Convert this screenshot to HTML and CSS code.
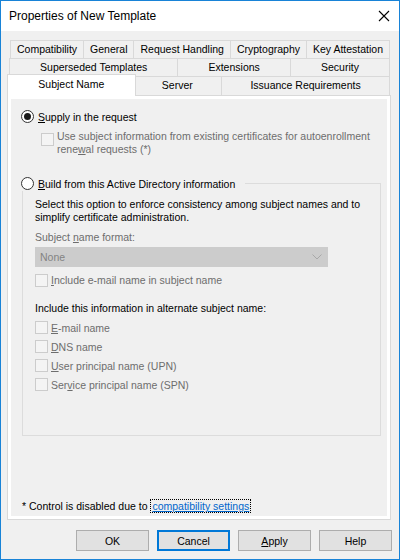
FILE: index.html
```html
<!DOCTYPE html>
<html lang="en">
<head>
    <meta charset="UTF-8">
    <meta name="viewport" content="width=device-width, initial-scale=1.0">
    <title>Properties of New Template</title>
    <link rel="stylesheet" href="styles.css">
</head>
<body>
    <div class="window">
        <div class="titlebar">
            <span class="title">Properties of New Template</span>
            <svg class="close" width="12" height="12" viewBox="0 0 12 12">
                <path d="M1 1 L11 11 M11 1 L1 11" stroke="#000" stroke-width="1.1" fill="none"/>
            </svg>
        </div>

        <div class="dialog">
            <div class="tabs">
                <div class="tab-row row-1">
                    <div class="tab">Compatibility</div>
                    <div class="tab">General</div>
                    <div class="tab">Request Handling</div>
                    <div class="tab">Cryptography</div>
                    <div class="tab">Key Attestation</div>
                </div>
                <div class="tab-row row-2">
                    <div class="tab">Superseded Templates</div>
                    <div class="tab">Extensions</div>
                    <div class="tab">Security</div>
                </div>
                <div class="tab-row row-3">
                    <div class="tab active">Subject Name</div>
                    <div class="tab">Server</div>
                    <div class="tab">Issuance Requirements</div>
                </div>
            </div>

            <div class="panel">
                <div class="page">
                    <label class="option">
                        <span class="radio checked"></span>
                        <span><u>S</u>upply in the request</span>
                    </label>

                    <label class="check sub disabled">
                        <span class="box"></span>
                        <span class="check-text">
                            <span class="line">Use subject information from existing certificates for autoenrollment</span>
                            <span class="line">rene<u>w</u>al requests (*)</span>
                        </span>
                    </label>

                    <fieldset class="group">
                        <legend>
                            <label class="option">
                                <span class="radio"></span>
                                <span><u>B</u>uild from this Active Directory information</span>
                            </label>
                        </legend>
                        <div class="group-body">
                            <p class="hint">Select this option to enforce consistency among subject names and to simplify certificate administration.</p>

                            <div class="field-label disabled">Subject <u>n</u>ame format:</div>
                            <div class="combo">
                                <span>None</span>
                                <svg width="10" height="6" viewBox="0 0 10 6">
                                    <path d="M0.5 0.5 L5 5 L9.5 0.5" stroke="#a8a8a8" stroke-width="1" fill="none"/>
                                </svg>
                            </div>

                            <label class="check disabled single">
                                <span class="box"></span>
                                <span><u>I</u>nclude e-mail name in subject name</span>
                            </label>

                            <p class="hint alt">Include this information in alternate subject name:</p>

                            <div class="check-list">
                                <label class="check disabled"><span class="box"></span><span><u>E</u>-mail name</span></label>
                                <label class="check disabled"><span class="box"></span><span><u>D</u>NS name</span></label>
                                <label class="check disabled"><span class="box"></span><span><u>U</u>ser principal name (UPN)</span></label>
                                <label class="check disabled"><span class="box"></span><span>Ser<u>v</u>ice principal name (SPN)</span></label>
                            </div>
                        </div>
                    </fieldset>

                    <div class="footnote">
                        * Control is disabled due to <a class="link" href="#">compatibility settings</a>
                    </div>
                </div>
            </div>

            <div class="buttons">
                <button class="btn">OK</button>
                <button class="btn default">Cancel</button>
                <button class="btn"><u>A</u>pply</button>
                <button class="btn">Help</button>
            </div>
        </div>
    </div>
</body>
</html>
```

FILE: styles.css
```css
* {
    box-sizing: border-box;
}

body {
    margin: 0;
    width: 400px;
    height: 560px;
    font-family: "Liberation Sans", Arial, sans-serif;
    font-size: 10.5px;
    color: #000;
    background-color: #f0f0f0;
}

.window {
    width: 400px;
    height: 560px;
    border: 1px solid #1883d7;
    display: flex;
    flex-direction: column;
    background-color: #f0f0f0;
}

/* title bar */
.titlebar {
    height: 30px;
    background-color: #fff;
    display: flex;
    align-items: center;
    justify-content: space-between;
    padding: 0 9px 0 8px;
}

.title {
    font-size: 12px;
}

.close {
    display: block;
}

/* dialog body */
.dialog {
    flex: 1;
    display: flex;
    flex-direction: column;
    padding: 9px 8px 8px 6px;
}

.tabs {
    display: flex;
    flex-direction: column;
}

.tab-row {
    display: flex;
}

.tab-row + .tab-row {
    margin-top: -1px;
}

.row-1 {
    margin: 0 2px 0 4px;
}

.row-2,
.row-3 {
    margin: 0 1px 0 3px;
}

.tab {
    flex: 1 1 auto;
    height: 19px;
    line-height: 17px;
    padding: 0 6px;
    margin-left: -1px;
    text-align: center;
    white-space: nowrap;
    border: 1px solid #d9d9d9;
    background-color: #f0f0f0;
}

.row-3 .tab {
    border-bottom: none;
}

.tab.active {
    position: relative;
    z-index: 1;
    height: 22px;
    margin: -2px -2px -1px -3px;
    padding: 1px 8px 0;
    background-color: #fff;
}

.panel {
    flex: 1;
    border: 1px solid #d9d9d9;
    background-color: #fff;
    padding: 3px;
    display: flex;
}

.page {
    flex: 1;
    background-color: #f0f0f0;
    display: flex;
    flex-direction: column;
    padding: 10px 6px 3px 10px;
}

/* radios and checkboxes */
.option {
    display: flex;
    align-items: center;
    gap: 4px;
    height: 15px;
}

.radio {
    width: 13px;
    height: 13px;
    border: 1px solid #333;
    border-radius: 50%;
    background-color: #fff;
    display: flex;
    align-items: center;
    justify-content: center;
    flex: none;
}

.radio.checked::after {
    content: "";
    width: 7px;
    height: 7px;
    border-radius: 50%;
    background-color: #1a1a1a;
}

.check {
    display: flex;
    align-items: center;
    gap: 3px;
    height: 13px;
}

.box {
    width: 13px;
    height: 13px;
    border: 1px solid #cccccc;
    background-color: #f4f4f4;
    flex: none;
}

.disabled {
    color: #6d6d6d;
}

.check.sub {
    align-items: flex-start;
    height: auto;
    margin: 6px 0 0 20px;
    line-height: 12.5px;
}

.check.sub .box {
    margin-top: 3px;
}

.check-text {
    display: flex;
    flex-direction: column;
}

.line {
    white-space: nowrap;
}

/* group box */
.group {
    margin: 21px 0 0 1px;
    padding: 0;
    border: 1px solid #dcdcdc;
    min-width: 0;
}

.group legend {
    padding: 0 10px 0 0;
    margin-left: -2px;
    background-color: #f0f0f0;
}

.group-body {
    padding: 0 12px 44px;
    display: flex;
    flex-direction: column;
}

.hint {
    margin: 7px 0 0;
    line-height: 12.5px;
}

.hint.alt {
    margin-top: 15px;
}

.field-label {
    margin-top: 8px;
    line-height: 12.5px;
}

.combo {
    margin-top: 3px;
    width: 293px;
    height: 20px;
    background-color: #cccccc;
    border: 1px solid #cccccc;
    color: #838383;
    display: flex;
    align-items: center;
    justify-content: space-between;
    padding: 0 5px 0 4px;
}

.combo svg {
    display: block;
}

.check.single {
    margin-top: 7px;
}

.check-list {
    margin-top: 7px;
    display: flex;
    flex-direction: column;
    gap: 6px;
}

/* footnote */
.footnote {
    margin-top: auto;
    padding-left: 1px;
    line-height: 14px;
}

.link {
    color: #0066cc;
    text-decoration: underline;
    border: 1px dotted #000;
    padding: 0 1px;
}

/* buttons */
.buttons {
    display: flex;
    justify-content: flex-end;
    gap: 8px;
    margin: 10px -1px 0 0;
}

.btn {
    width: 73px;
    height: 21px;
    font-family: "Liberation Sans", Arial, sans-serif;
    font-size: 10.5px;
    color: #000;
    background-color: #e1e1e1;
    border: 1px solid #adadad;
    padding: 0;
}

.btn.default {
    border: 2px solid #0078d7;
}
```
